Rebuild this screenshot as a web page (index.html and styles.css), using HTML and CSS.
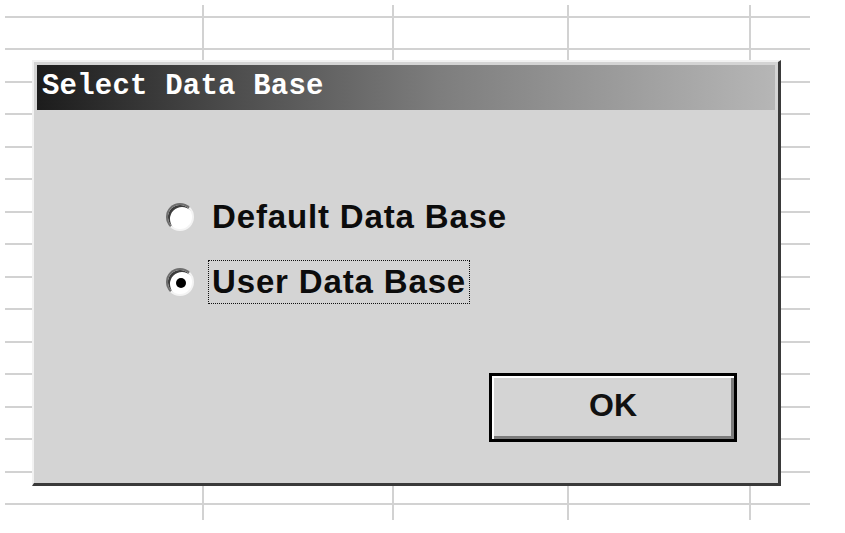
FILE: index.html
```html
<!DOCTYPE html>
<html lang="en">
<head>
    <meta charset="UTF-8">
    <title>Select Data Base</title>
    <link rel="stylesheet" href="styles.css">
</head>
<body>
    <div class="sheet">
        <div class="dialog">
            <div class="titlebar">Select Data Base</div>
            <div class="dialog-body">
                <div class="options">
                    <label class="option">
                        <span class="radio"></span>
                        <span class="option-text">Default Data Base</span>
                    </label>
                    <label class="option">
                        <span class="radio checked"></span>
                        <span class="option-text focused">User Data Base</span>
                    </label>
                </div>
                <div class="actions">
                    <button class="btn">OK</button>
                </div>
            </div>
        </div>
    </div>
</body>
</html>
```

FILE: styles.css
```css
body {
    margin: 0;
    background: #fff;
    font-family: "Liberation Sans", Arial, sans-serif;
}
.sheet {
    position: relative;
    width: 805px;
    height: 515px;
    margin: 5px 0 0 5px;
    background-image:
        linear-gradient(#d2d2d2, #d2d2d2),
        linear-gradient(#d2d2d2, #d2d2d2),
        linear-gradient(#d2d2d2, #d2d2d2),
        linear-gradient(#d2d2d2, #d2d2d2),
        repeating-linear-gradient(to bottom, #d2d2d2 0 2px, transparent 2px 32.47px);
    background-size: 2px 100%, 2px 100%, 2px 100%, 2px 100%, 100% 490px;
    background-position: 197px 0, 387px 0, 562px 0, 744px 0, 0 11px;
    background-repeat: no-repeat;
}
.dialog {
    position: absolute;
    left: 27px;
    top: 55px;
    width: 749px;
    height: 426px;
    box-sizing: border-box;
    display: flex;
    flex-direction: column;
    background: #d4d4d4;
    border-style: solid;
    border-width: 2px 3px 3px 2px;
    border-color: #f2f2f2 #3a3a3a #3a3a3a #f2f2f2;
    padding: 3px;
}
.titlebar {
    height: 45px;
    box-sizing: border-box;
    padding: 7px 0 0 5px;
    background: linear-gradient(to right, #1c1c1c 0%, #4a4a4a 25%, #7e7e7e 55%, #b6b6b6 100%);
    color: #fff;
    font-family: "Liberation Mono", "Courier New", monospace;
    font-weight: bold;
    font-size: 29px;
    line-height: 30px;
    letter-spacing: 0.2px;
}
.dialog-body {
    flex: 1;
    display: flex;
    flex-direction: column;
    padding: 85px 38px 38px 129px;
}
.options {
    display: flex;
    flex-direction: column;
    gap: 21px;
}
.option {
    display: flex;
    align-items: center;
    gap: 14px;
    height: 44px;
}
.radio {
    position: relative;
    width: 28px;
    height: 28px;
    box-sizing: border-box;
    border-radius: 50%;
    background: #fff;
    border: 2px solid;
    border-color: #6e6e6e #f4f4f4 #f4f4f4 #6e6e6e;
    box-shadow: inset 2px 2px 0 #3c3c3c;
}
.radio.checked::after {
    content: "";
    position: absolute;
    left: 8px;
    top: 8px;
    width: 10px;
    height: 10px;
    border-radius: 50%;
    background: #000;
}
.option-text {
    font-weight: bold;
    font-size: 33px;
    letter-spacing: 0.85px;
    color: #0c0c0c;
    line-height: 38px;
    padding: 2px 3px;
    border: 1px dotted transparent;
}
.option-text.focused {
    border-color: #111;
}
.actions {
    margin-top: auto;
    display: flex;
    justify-content: flex-end;
}
.btn {
    width: 248px;
    height: 69px;
    background: #d4d4d4;
    border: 3px solid #000;
    box-shadow: inset 2px 2px 0 #fff, inset -3px -3px 0 #7c7c7c;
    font-family: "Liberation Sans", Arial, sans-serif;
    font-weight: bold;
    font-size: 32px;
    color: #111;
    padding: 0 0 4px 0;
}
```
